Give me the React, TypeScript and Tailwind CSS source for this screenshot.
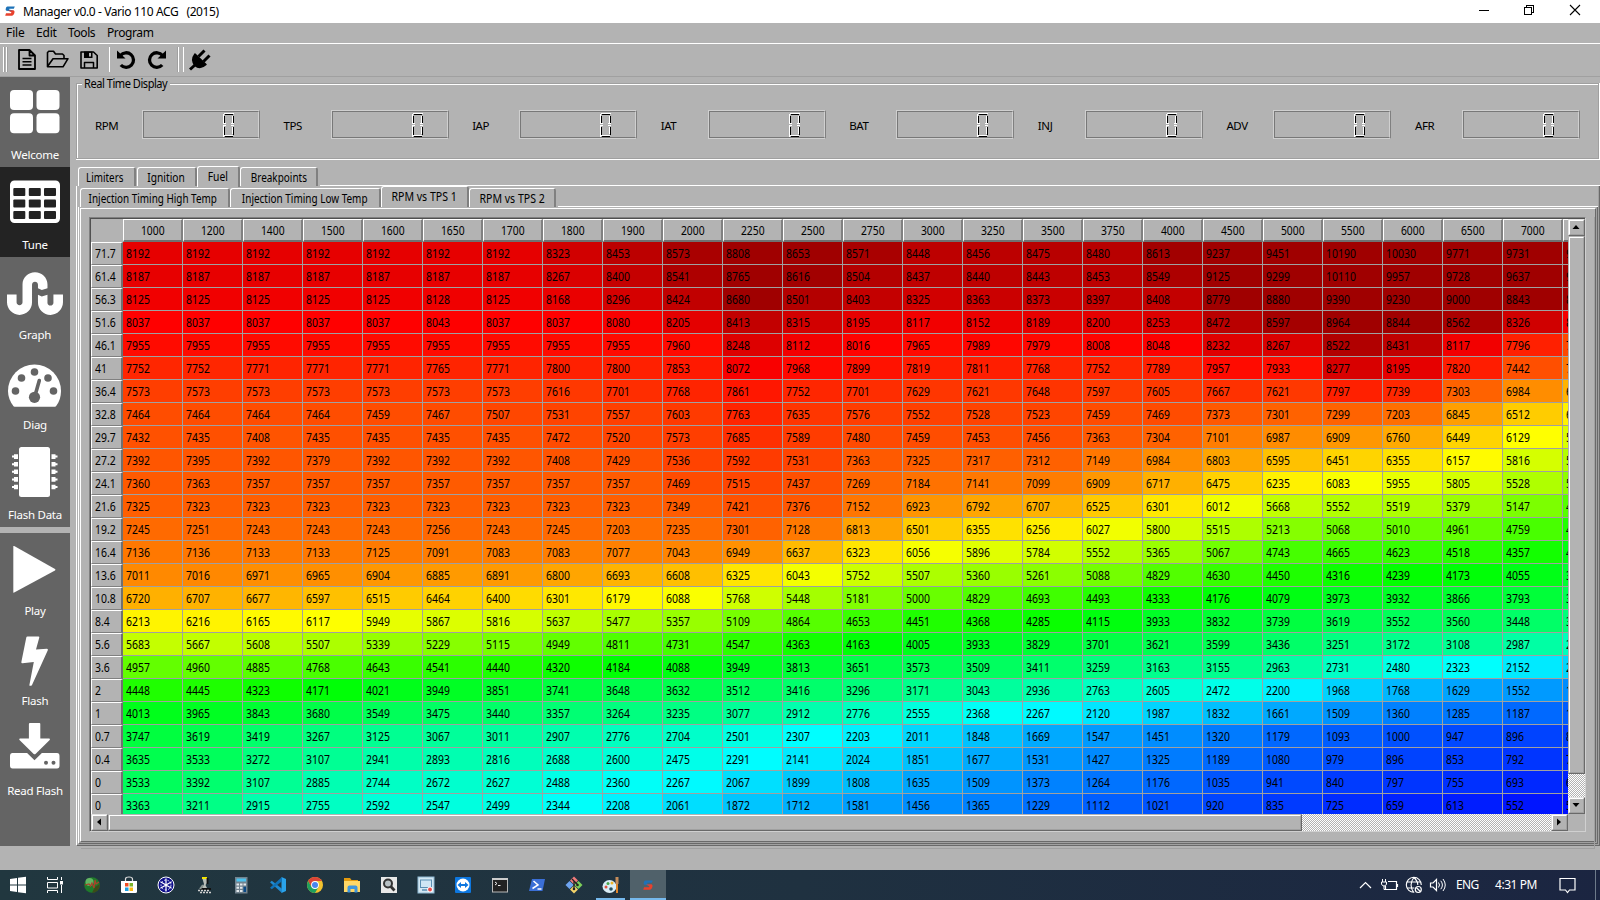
import React from "react";
import { FaStumbleupon } from "react-icons/fa";

const COLUMNS = [1000, 1200, 1400, 1500, 1600, 1650, 1700, 1800, 1900, 2000, 2250, 2500, 2750, 3000, 3250, 3500, 3750, 4000, 4500, 5000, 5500, 6000, 6500, 7000];

const TABLE: [string, string][] = [
  ["71.7", "8192 8192 8192 8192 8192 8192 8192 8323 8453 8573 8808 8653 8571 8448 8456 8475 8480 8613 9237 9451 10190 10030 9771 9731 9500"],
  ["61.4", "8187 8187 8187 8187 8187 8187 8187 8267 8400 8541 8765 8616 8504 8437 8440 8443 8453 8549 9125 9299 10110 9957 9728 9637 9400"],
  ["56.3", "8125 8125 8125 8125 8125 8128 8125 8168 8296 8424 8680 8501 8403 8325 8363 8373 8397 8408 8779 8880 9390 9230 9000 8843 8650"],
  ["51.6", "8037 8037 8037 8037 8037 8043 8037 8037 8080 8205 8413 8315 8195 8117 8152 8189 8200 8253 8472 8597 8964 8844 8562 8326 8100"],
  ["46.1", "7955 7955 7955 7955 7955 7955 7955 7955 7955 7960 8248 8112 8016 7965 7989 7979 8008 8048 8232 8267 8522 8431 8117 7796 7500"],
  ["41", "7752 7752 7771 7771 7771 7765 7771 7800 7800 7853 8072 7968 7899 7819 7811 7768 7752 7789 7957 7933 8277 8195 7820 7442 7150"],
  ["36.4", "7573 7573 7573 7573 7573 7573 7573 7616 7701 7768 7861 7752 7701 7629 7621 7648 7597 7605 7667 7621 7797 7739 7303 6984 6700"],
  ["32.8", "7464 7464 7464 7464 7459 7467 7507 7531 7557 7603 7763 7635 7576 7552 7528 7523 7459 7469 7373 7301 7299 7203 6845 6512 6220"],
  ["29.7", "7432 7435 7408 7435 7435 7435 7435 7472 7520 7573 7685 7589 7480 7459 7453 7456 7363 7304 7101 6987 6909 6760 6449 6129 5850"],
  ["27.2", "7392 7395 7392 7379 7392 7392 7392 7408 7429 7536 7592 7531 7363 7325 7317 7312 7149 6984 6803 6595 6451 6355 6157 5816 5560"],
  ["24.1", "7360 7363 7357 7357 7357 7357 7357 7357 7357 7469 7515 7437 7269 7184 7141 7099 6909 6717 6475 6235 6083 5955 5805 5528 5280"],
  ["21.6", "7325 7323 7323 7323 7323 7323 7323 7323 7323 7349 7421 7376 7152 6923 6792 6707 6525 6301 6012 5668 5552 5519 5379 5147 4850"],
  ["19.2", "7245 7251 7243 7243 7243 7256 7243 7245 7203 7235 7301 7128 6813 6501 6355 6256 6027 5800 5515 5213 5068 5010 4961 4759 4450"],
  ["16.4", "7136 7136 7133 7133 7125 7091 7083 7083 7077 7043 6949 6637 6323 6056 5896 5784 5552 5365 5067 4743 4665 4623 4518 4357 4100"],
  ["13.6", "7011 7016 6971 6965 6904 6885 6891 6800 6693 6608 6325 6043 5752 5507 5360 5261 5088 4829 4630 4450 4316 4239 4173 4055 3850"],
  ["10.8", "6720 6707 6677 6597 6515 6464 6400 6301 6179 6088 5768 5448 5181 5000 4829 4693 4493 4333 4176 4079 3973 3932 3866 3793 3600"],
  ["8.4", "6213 6216 6165 6117 5949 5867 5816 5637 5477 5357 5109 4864 4653 4451 4368 4285 4115 3933 3832 3739 3619 3552 3560 3448 3300"],
  ["5.6", "5683 5667 5608 5507 5339 5229 5115 4949 4811 4731 4547 4363 4163 4005 3933 3829 3701 3621 3599 3436 3251 3172 3108 2987 2800"],
  ["3.6", "4957 4960 4885 4768 4643 4541 4440 4320 4184 4088 3949 3813 3651 3573 3509 3411 3259 3163 3155 2963 2731 2480 2323 2152 2000"],
  ["2", "4448 4445 4323 4171 4021 3949 3851 3741 3648 3632 3512 3416 3296 3171 3043 2936 2763 2605 2472 2200 1968 1768 1629 1552 1450"],
  ["1", "4013 3965 3843 3680 3549 3475 3440 3357 3264 3235 3077 2912 2776 2555 2368 2267 2120 1987 1832 1661 1509 1360 1285 1187 1080"],
  ["0.7", "3747 3619 3419 3267 3125 3067 3011 2907 2776 2704 2501 2307 2203 2011 1848 1669 1547 1451 1320 1179 1093 1000 947 896 850"],
  ["0.4", "3635 3533 3272 3107 2941 2893 2816 2688 2600 2475 2291 2141 2024 1851 1677 1531 1427 1325 1189 1080 979 896 853 792 720"],
  ["0", "3533 3392 3107 2885 2744 2672 2627 2488 2360 2267 2067 1899 1808 1635 1509 1373 1264 1176 1035 941 840 797 755 693 630"],
  ["0", "3363 3211 2915 2755 2592 2547 2499 2344 2208 2061 1872 1712 1581 1456 1365 1229 1112 1021 920 835 725 659 613 552 510"],
];

/* Heat scale: blue > cyan > green > yellow > red > dark red */
function heat(v: number): string {
  const seg = 1910;
  const f = (d: number) => Math.max(0, Math.min(255, Math.round((d / seg) * 255)));
  if (v >= 8037) return `rgb(${Math.max(160, Math.round(255 - (v - 8037) * 0.161))},0,0)`;
  if (v >= 6127) return `rgb(255,${f(8037 - v)},0)`;
  if (v >= 4217) return `rgb(${f(v - 4217)},255,0)`;
  if (v >= 2307) return `rgb(0,255,${f(4217 - v)})`;
  return `rgb(0,${f(v - 397)},255)`;
}

function TitleLogo({ className }: { className: string }) {
  return (
    <svg viewBox="0 0 10 10" className={className}>
      <path d="M2.4 0.4 H9.8 L8.8 2.8 H4.4 L4 3.6 L8 4.6 L7.4 5.6 L1.4 4.8 Q0.2 4.2 0.8 2.4 Q1.2 0.6 2.4 0.4Z" fill="#1d72b8" />
      <path d="M3 4.6 L8.6 4.2 Q10 4.8 9.4 7 Q8.8 9.4 7.2 9.7 H0.2 L1 7.3 H6 L6.4 6.2Z" fill="#e8412c" />
    </svg>
  );
}

function TitleBar() {
  return (
    <div className="flex h-[23px] shrink-0 items-center bg-white pl-[5px] text-black">
      <TitleLogo className="mt-[-2px] h-[10px] w-[10px]" />
      <span className="ml-2 whitespace-pre text-[12px] leading-[22px] tracking-[-0.4px]">Manager v0.0 - Vario 110 ACG   (2015)</span>
      <svg viewBox="0 0 110 23" className="ml-auto mr-[16px] h-[23px] w-[110px]" fill="none" stroke="#000" shapeRendering="crispEdges">
        <path d="M5 10.5 H15" />
        <path d="M50.5 7.5 H57.5 V14.5 H50.5Z M52.5 7 V5.5 H59.5 V12.5 H58" />
        <path d="M96 5 L106 15 M106 5 L96 15" shapeRendering="auto" strokeWidth="1.1" />
      </svg>
    </div>
  );
}

function MenuBar() {
  return (
    <div className="flex h-[20px] shrink-0 items-center pl-[6px] text-[12px] leading-[20px]">
      <span className="w-[30px] tracking-[-0.1px]">File</span>
      <span className="w-[32px] tracking-[-0.2px]">Edit</span>
      <span className="w-[39px] tracking-[-0.4px]">Tools</span>
      <span className="tracking-[-0.4px]">Program</span>
    </div>
  );
}

function ToolBar() {
  return (
    <div className="flex h-[34px] shrink-0 items-center border-t border-b border-t-white border-b-[#a0a0a0]">
      <svg viewBox="0 0 220 32" className="h-[32px] w-[220px]" fill="none" stroke="#000">
        <g shapeRendering="crispEdges">
          <path d="M3.5 3 V28 M6.5 3 V28 M109.5 3 V28 M178.5 3 V28 M183.5 3 V28" stroke="#fff" />
          <path d="M4.5 3 V28 M7.5 3 V28 M177.5 3 V28" stroke="#a0a0a0" />
        </g>
        <g strokeWidth="1.8" strokeLinejoin="round">
          <path d="M19 6 H29.5 L35 11.5 V25 H19Z M29.5 6 V11.5 H35" />
          <path d="M22.5 14.5 H31.5 M22.5 17.8 H31.5 M22.5 21 H31.5" strokeWidth="1.4" />
          <path d="M47.5 22.5 V8.5 L49 7.2 H53.5 L55.5 10 H62.5 L64 11.5 V14.5 M47.5 22.5 L53 14.7 H68 L63 22.8 H47.5Z" strokeWidth="1.6" />
          <path d="M81 8 H93.5 L97.2 11.5 V24 H81Z" strokeWidth="1.6" />
          <path d="M84.5 24 V18.5 H93.5 V24" strokeWidth="1.5" />
        </g>
        <path d="M84 7.5 H92.5 V14 H84Z M89 8.7 V12.5 H91 V8.7Z" fill="#000" fillRule="evenodd" stroke="none" />
        <path d="M120.5 11.5 A7.3 7.3 0 1 1 120.8 21" strokeWidth="3.3" />
        <path d="M117 6.5 V14.5 H125.5Z" fill="#000" stroke="none" />
        <path d="M162.5 11.5 A7.3 7.3 0 1 0 162.2 21" strokeWidth="3.3" />
        <path d="M166 6.5 V14.5 H157.5Z" fill="#000" stroke="none" />
        <path d="M195 10 L206 20.5 Q200 26 195 21.5 Q190.5 16 195 10Z" fill="#000" strokeWidth="1.5" strokeLinejoin="round" />
        <path d="M195.5 20.5 L190 25.5" strokeWidth="3" />
        <path d="M198.5 12.5 L204.5 6.5 M203.5 17.5 L209.5 11.5" strokeWidth="3" />
      </svg>
    </div>
  );
}

function IconWelcome() {
  return (
    <svg viewBox="0 0 70 90" className="h-[90px] w-[70px]" fill="#fff">
      <rect x="10" y="13" width="23" height="20" rx="4" />
      <rect x="36.5" y="13" width="23" height="20" rx="4" />
      <rect x="10" y="36.3" width="23" height="20" rx="4" />
      <rect x="36.5" y="36.3" width="23" height="20" rx="4" />
    </svg>
  );
}

function IconTable() {
  return (
    <svg viewBox="0 0 70 90" className="h-[90px] w-[70px]">
      <rect x="10" y="13.5" width="50" height="42.5" rx="4.5" fill="#fff" />
      <g fill="#232323">
        {[13.3, 28.8, 44].map((x) =>
          [21, 32.6, 44].map((y) => <rect key={`${x}-${y}`} x={x} y={y} width="12" height="8" rx="1" />)
        )}
      </g>
    </svg>
  );
}

function IconGauge() {
  return (
    <svg viewBox="0 0 70 90" className="h-[90px] w-[70px]">
      <path d="M13.5 59.3 C10 54.5 8 49.5 8 44 A26.5 26.5 0 0 1 61 44 C61 49.5 59.5 54.5 56 59.3 Q55.5 59.7 55 59.7 H14.5 Q14 59.7 13.5 59.3Z" fill="#fff" />
      <g fill="#646464">
        <circle cx="15.5" cy="44" r="3.8" />
        <circle cx="21.5" cy="31" r="3.8" />
        <circle cx="34.5" cy="25" r="3.8" />
        <circle cx="48" cy="31" r="3.8" />
        <circle cx="53.5" cy="44" r="3.8" />
        <circle cx="34.5" cy="50.3" r="5.6" />
      </g>
      <path d="M35.5 47 L39.3 33.5" stroke="#646464" strokeWidth="3.6" strokeLinecap="round" />
    </svg>
  );
}

function IconChip() {
  return (
    <svg viewBox="0 0 70 90" className="h-[90px] w-[70px]" fill="#fff">
      <rect x="19" y="10" width="31" height="50" rx="2.5" />
      {[19.6, 27.2, 34.8, 42.4, 50].map((y) => (
        <g key={y}>
          <path d={`M18 ${y - 2.3} H14 V${y - 1} H12 V${y + 1} H14 V${y + 2.3} H18Z`} />
          <path d={`M51.5 ${y - 2.3} H55.5 V${y - 1} H57.5 V${y + 1} H55.5 V${y + 2.3} H51.5Z`} />
        </g>
      ))}
    </svg>
  );
}

function IconPlay() {
  return (
    <svg viewBox="0 0 70 90" className="h-[90px] w-[70px]" fill="#fff">
      <path d="M13.3 13.5 Q13.3 12.6 14.2 13.1 L55 36 Q56 36.7 55 37.4 L14.2 59.6 Q13.3 60 13.3 59.2Z" />
    </svg>
  );
}

function IconBolt() {
  return (
    <svg viewBox="0 0 70 90" className="h-[90px] w-[70px]" fill="#fff">
      <path d="M27.5 13.5 H38.5 Q39.5 13.5 39.3 14.5 L36 26.5 L47 25.8 Q48.3 26 47.8 27.3 L32 62 Q31 63.4 29.3 62.5 L33.8 39 L22.5 40.3 Q21 40.4 21.4 38.8 L26.3 14.5 Q26.5 13.5 27.5 13.5Z" />
    </svg>
  );
}

function IconDrive() {
  return (
    <svg viewBox="0 0 70 90" className="h-[90px] w-[70px]">
      <path d="M12.5 40 H57 Q59.5 40 59.5 43 V52.5 Q59.5 55.5 57 55.5 H12.5 Q10 55.5 10 52.5 V43 Q10 40 12.5 40Z" fill="#fff" />
      <path d="M28 38 L34.5 44.5 L41 38" stroke="#646464" strokeWidth="4" fill="#646464" />
      <path d="M30 10 H39.5 Q40.3 10 40.3 11 V25.5 H49.2 Q50.5 25.8 49.7 26.9 L35.5 41 Q34.6 41.7 33.7 41 L19.5 26.9 Q18.6 25.8 20 25.5 H28.9 V11 Q28.9 10 30 10Z" fill="#fff" />
      <circle cx="46" cy="49.7" r="2" fill="#646464" />
      <circle cx="53.5" cy="49.7" r="2" fill="#646464" />
    </svg>
  );
}

function SideItem({ label, active, children }: { label: string; active?: boolean; children: React.ReactNode }) {
  return (
    <div className={active ? "relative h-[90px] bg-[#232323]" : "relative h-[90px]"}>
      {children}
      <span className="absolute inset-x-0 top-[69px] text-center text-[11.5px] leading-[18px] tracking-[-0.25px] whitespace-nowrap text-white">{label}</span>
    </div>
  );
}

function Sidebar() {
  return (
    <div className="flex h-[769px] w-[70px] shrink-0 flex-col gap-[6px]">
      <div className="h-[450px] bg-[#646464]">
        <SideItem label="Welcome"><IconWelcome /></SideItem>
        <SideItem label="Tune" active><IconTable /></SideItem>
        <SideItem label="Graph">
          <div className="flex h-[90px] w-[70px] justify-center pt-[8px]">
            <FaStumbleupon className="h-[57px] w-[57px] text-white" />
          </div>
        </SideItem>
        <SideItem label="Diag"><IconGauge /></SideItem>
        <SideItem label="Flash Data"><IconChip /></SideItem>
      </div>
      <div className="flex-1 bg-[#646464]">
        <SideItem label="Play"><IconPlay /></SideItem>
        <SideItem label="Flash"><IconBolt /></SideItem>
        <SideItem label="Read Flash"><IconDrive /></SideItem>
      </div>
    </div>
  );
}

function Lcd() {
  return (
    <div className="flex h-[29px] w-[118px] border border-t-[#d0d0d0] border-r-[#808080] border-b-[#d0d0d0] border-l-[#d0d0d0]">
      <div className="flex-1 border border-t-[#787878] border-r-[#d0d0d0] border-b-[#787878] border-l-[#787878]">
        <svg viewBox="0 0 114 25" className="h-[25px] w-[114px]" shapeRendering="crispEdges" fill="none">
          <path d="M79.5 1.5 V12 M79.5 14 V24.5 M80 1.5 H90 M80 23.5 H89 M88.5 4 V11 M88.5 15 V22 M79 11.5 H82 M79 13.5 H82 M87 11.5 H90 M87 13.5 H90" stroke="#fff" />
          <path d="M81 2.5 H89 M81 24.5 H89 M80.5 4 V11 M80.5 15 V23 M89.5 4 V11 M89.5 15 V23" stroke="#000" />
        </svg>
      </div>
    </div>
  );
}

function RealTimeDisplay() {
  return (
    <div className="relative mt-[6px] mr-px ml-[6px] h-[76px] border border-[#a0a0a0]">
      <div className="flex h-full w-full items-start justify-between border-t border-l border-white pt-[25px] pr-[18px] pl-[17px]">
        {["RPM", "TPS", "IAP", "IAT", "BAT", "INJ", "ADV", "AFR"].map((n) => (
          <div key={n} className="flex items-center">
            <span className="mt-[3px] w-[47px] text-[11.5px] leading-[18px] tracking-[-0.4px]">{n}</span>
            <Lcd />
          </div>
        ))}
      </div>
      <div className="absolute -bottom-[2px] -left-px right-[-2px] h-px bg-white" />
      <div className="absolute -top-px -right-[2px] bottom-[-2px] w-px bg-white" />
      <div className="absolute -top-[2px] left-[5px] flex h-[4px] w-[88px] items-center bg-[#b3b3b3] pl-[2px]">
        <span className="origin-left scale-x-[0.92] text-[12px] leading-[18px] tracking-[-0.5px] whitespace-nowrap">Real Time Display</span>
      </div>
    </div>
  );
}

function Tab({ label, box, squeeze, active }: { label: string; box: string; squeeze: string; active?: boolean }) {
  const base = "flex justify-center rounded-t-[3px] border-t border-l border-r-2 border-t-white border-l-white border-r-[#808080] whitespace-nowrap text-[12px] leading-[20px]";
  return (
    <div className={`${base} ${active ? "h-[21px]" : "h-[19px]"} ${box}`}>
      <span className={`shrink-0 ${squeeze}`}>{label}</span>
    </div>
  );
}

function HeaderCell({ children }: { children?: React.ReactNode }) {
  return (
    <div className="flex h-[23px] w-[60px] shrink-0 items-center justify-center border-t border-r-2 border-b-2 border-l border-t-white border-r-[#808080] border-b-[#707070] border-l-white pt-[2px]">
      <span className="scale-x-[0.86] text-[12px] leading-[20px]">{children}</span>
    </div>
  );
}

function MapGrid() {
  return (
    <div className="h-[595px] w-[1477px] overflow-hidden">
      <div className="flex w-[1532px]">
        <div className="h-[23px] w-[32px] shrink-0" />
        {COLUMNS.map((c) => (
          <HeaderCell key={c}>{c}</HeaderCell>
        ))}
        <HeaderCell />
      </div>
      {TABLE.map(([head, values], r) => (
        <div key={r} className="flex w-[1532px]">
          <div className="flex h-[23px] w-[32px] shrink-0 items-center border-t border-r-2 border-b border-l border-t-white border-r-[#707070] border-b-[#808080] border-l-white pt-px pl-[3px]">
            <span className="origin-left scale-x-[0.87] text-[12px] leading-[20px]">{head}</span>
          </div>
          {values.split(" ").map((v, i) => (
            <div key={i} className="flex h-[23px] w-[60px] shrink-0 items-center border-r border-b border-[#a0a0a0] pt-[2px] pl-[3px]" style={{ backgroundColor: heat(Number(v)) }}>
              <span className="origin-left scale-x-[0.87] text-[12px] leading-[20px]">{v}</span>
            </div>
          ))}
        </div>
      ))}
    </div>
  );
}

function ScrollButton({ points, box }: { points: string; box: string }) {
  return (
    <div className={`shrink-0 border border-t-[#e3e3e3] border-r-[#696969] border-b-[#696969] border-l-[#e3e3e3] ${box}`}>
      <div className="flex h-full w-full items-center justify-center border border-t-white border-r-[#a0a0a0] border-b-[#a0a0a0] border-l-white pr-px pb-px">
        <svg viewBox="0 0 8 8" className="h-[8px] w-[8px]">
          <polygon points={points} fill="#000" />
        </svg>
      </div>
    </div>
  );
}

function Thumb({ box }: { box: string }) {
  return (
    <div className={`border border-t-[#b3b3b3] border-r-[#696969] border-b-[#696969] border-l-[#b3b3b3] bg-[#b3b3b3] ${box}`}>
      <div className="h-full w-full border border-t-white border-r-[#a0a0a0] border-b-[#a0a0a0] border-l-white" />
    </div>
  );
}

const DITHER = "bg-[repeating-conic-gradient(#fff_0_25%,#b3b3b3_0_50%)] bg-[length:2px_2px]";

function MapView() {
  return (
    <div className="mt-[8px] ml-[8px] h-[615px] w-[1497px] border border-t-[#808080] border-r-[#d0d0d0] border-b-[#d0d0d0] border-l-[#808080]">
      <div className="h-full w-full border-t border-l border-[#505050]">
        <div className="flex">
          <MapGrid />
          <div className={`flex h-[595px] w-[17px] flex-col ${DITHER}`}>
            <ScrollButton box="h-[17px] w-[17px] bg-[#b3b3b3]" points="0.5,6 4,2 7.5,6" />
            <Thumb box="h-[538px] w-[17px]" />
            <div className="flex-1" />
            <ScrollButton box="h-[17px] w-[17px] bg-[#b3b3b3]" points="0.5,2 7.5,2 4,6" />
          </div>
        </div>
        <div className={`flex h-[17px] w-[1477px] ${DITHER}`}>
          <ScrollButton box="h-[17px] w-[17px] bg-[#b3b3b3]" points="6,0.5 6,7.5 2,4" />
          <Thumb box="h-[17px] w-[1194px]" />
          <div className="flex-1" />
          <ScrollButton box="h-[17px] w-[17px] bg-[#b3b3b3]" points="2,0.5 2,7.5 6,4" />
        </div>
      </div>
    </div>
  );
}

const PANE = "border-t border-l border-t-white border-l-white border-r border-b border-r-[#696969] border-b-[#696969]";

function TunePane() {
  return (
    <div className="mt-[7px] ml-[6px] flex flex-1 flex-col">
      <div className="flex h-[20px] shrink-0 items-end pl-[2px]">
        <Tab label="Limiters" box="w-[58px] pr-[3px]" squeeze="scale-x-[0.82]" />
        <Tab label="Ignition" box="ml-px w-[60px] pr-px" squeeze="scale-x-[0.85]" />
        <Tab label="Fuel" box="-mb-px w-[43px] pr-px" squeeze="scale-x-[0.86]" active />
        <Tab label="Breakpoints" box="w-[78px]" squeeze="scale-x-[0.83]" />
        <div className="ml-[2px] h-px flex-1 bg-white" />
      </div>
      <div className="flex h-[660px] flex-col border-r border-b border-l border-r-[#696969] border-b-[#696969] border-l-white">
        <div className="flex flex-1 flex-col border-r border-b border-[#a0a0a0] pl-px">
          <div className="flex h-[21px] shrink-0 items-end pl-[2px]">
            <Tab label="Injection Timing High Temp" box="w-[150px] pr-[3px]" squeeze="scale-x-[0.825]" />
            <Tab label="Injection Timing Low Temp" box="w-[151px] pr-px" squeeze="scale-x-[0.83]" />
            <Tab label="RPM vs TPS 1" box="w-[88px]" squeeze="scale-x-[0.88]" active />
            <Tab label="RPM vs TPS 2" box="w-[87px] pl-px" squeeze="scale-x-[0.88]" />
            <div className="ml-[2px] h-px flex-1 bg-white" />
          </div>
          <div className="flex flex-1 flex-col border-r border-b border-l border-r-[#696969] border-b-[#696969] border-l-white">
            <div className="flex flex-1 flex-col border-r border-b border-[#a0a0a0] pt-px pl-px">
              <div className={`flex-1 ${PANE}`}>
                <div className="h-full w-full border-r border-b border-[#a0a0a0]">
                  <MapView />
                </div>
              </div>
            </div>
          </div>
        </div>
      </div>
    </div>
  );
}

function S({ children }: { children: React.ReactNode }) {
  return <svg viewBox="0 0 18 18" className="h-[18px] w-[18px]">{children}</svg>;
}

function TaskIcon({ children, box = "w-[37px]" }: { children: React.ReactNode; box?: string }) {
  return <div className={`flex h-[30px] shrink-0 items-center justify-center ${box}`}>{children}</div>;
}

function TaskBar() {
  return (
    <div className="flex h-[30px] shrink-0 bg-linear-to-r from-[#21373f] via-[#1f3140] to-[#1b2541] text-white">
      <TaskIcon box="w-[36px]">
        <S><path d="M1 3 L8 2 V8.5 H1Z M9 1.8 L17 0.8 V8.5 H9Z M1 9.5 H8 V16 L1 15Z M9 9.5 H17 V17.2 L9 16.2Z" fill="#fff" /></S>
      </TaskIcon>
      <TaskIcon>
        <S><path d="M1.5 1 V3.5 H11.5 V1 M1.5 17 V14.5 H11.5 V17 M1.5 6.5 H11.5 V12 H1.5Z M15.5 1 V4 M15.5 9 V17" fill="none" stroke="#fff" /><path d="M14 5 H17 V8.5 H14Z" fill="#fff" /></S>
      </TaskIcon>
      <TaskIcon box="w-[38px]">
        <S><circle cx="9" cy="9" r="7.8" fill="#1f7a2a" /><circle cx="6.5" cy="6" r="4" fill="#7fd07c" opacity=".7" /><path d="M9 16.8 A7.8 7.8 0 0 0 16.7 8 L12 11Z" fill="#3c4a18" /><path d="M2 9 L6 8 L7.5 10 L9 7 L11 12 L12 4 L13 8 L16 6" stroke="#a8432b" strokeWidth="1.2" fill="none" /></S>
      </TaskIcon>
      <TaskIcon box="w-[36px]">
        <S><path d="M1 5 H17 V15.5 Q17 17 15.5 17 H2.5 Q1 17 1 15.5Z" fill="#fff" /><path d="M5.5 5 V3 Q5.5 1 9 1 Q12.5 1 12.5 3 V5" fill="none" stroke="#ddd" strokeWidth="1.2" /><path d="M5 7 H8.5 V10.5 H5Z" fill="#f04e23" /><path d="M9.5 7 H13 V10.5 H9.5Z" fill="#7db52b" /><path d="M5 11.5 H8.5 V15 H5Z" fill="#1ba1e2" /><path d="M9.5 11.5 H13 V15 H9.5Z" fill="#fdb913" /></S>
      </TaskIcon>
      <TaskIcon box="w-[38px]">
        <S><circle cx="9" cy="9" r="8" fill="#10108c" stroke="#fff" strokeWidth="1" /><circle cx="9" cy="9" r="5" fill="none" stroke="#fff" strokeWidth=".8" strokeDasharray="2 1.5" /><path d="M9 2.5 V15.5 M3.4 5.8 L14.6 12.2 M14.6 5.8 L3.4 12.2" stroke="#fff" strokeWidth="1.2" /></S>
      </TaskIcon>
      <TaskIcon box="w-[37px]">
        <S><path d="M7 1 H12 V3 H7Z" fill="#f3e600" /><path d="M7.5 3 H12 V7 L10.5 9 L12 12 H7 L9 8Z" fill="#b9bdb8" /><path d="M12.5 2 V8 M5 13 H16 M12 12 V14" stroke="#111" strokeWidth="1.8" /><path d="M3 14.5 H15 M5 16.5 H17" stroke="#d0d0d0" strokeWidth="1.3" strokeDasharray="2 1" /><path d="M8 9 L5 13" stroke="#8d9691" strokeWidth="2" /></S>
      </TaskIcon>
      <TaskIcon>
        <S><rect x="3" y="1" width="12.5" height="16.5" fill="#72838f" /><path d="M4.5 2.5 H14 V5.5 H4.5Z" fill="#4cc2ef" /><path d="M4.5 7.5 H7 V9.5 H4.5Z M8 7.5 H10.5 V9.5 H8Z M11.5 7.5 H14 V9.5 H11.5Z M4.5 10.7 H7 V12.7 H4.5Z M8 10.7 H10.5 V12.7 H8Z M4.5 14 H7 V16 H4.5Z M8 14 H10.5 V16 H8Z" fill="#e2e8ec" /><path d="M11.5 10.7 H14 V16 H11.5Z" fill="#0b4a86" /></S>
      </TaskIcon>
      <TaskIcon>
        <S><path d="M12.5 1 L17 3 V15 L12.5 17Z" fill="#2aa3ea" /><path d="M1 6.2 L2.8 4.8 L13 12.8 V17Z" fill="#1f8ad2" /><path d="M1 11.8 L2.8 13.2 L13 5.2 V1Z" fill="#0f72b8" /></S>
      </TaskIcon>
      <TaskIcon>
        <S><circle cx="9" cy="9" r="8" fill="#f3c22f" /><path d="M2.1 5 A8 8 0 0 1 15.9 5 H9 L5.5 11Z" fill="#dc4437" /><path d="M2.1 5 A8 8 0 0 0 9 17 L12.5 11 H5.5Z" fill="#1fa05d" /><circle cx="9" cy="9" r="3.9" fill="#fff" /><circle cx="9" cy="9" r="3" fill="#4a85ee" /></S>
      </TaskIcon>
      <TaskIcon>
        <S><path d="M1 2 H7 L8.5 4 H15 V9 H1Z" fill="#e49b0e" /><path d="M1 5 H17 V16 H1Z" fill="#ffd766" /><path d="M4.5 16.5 V11.5 Q4.5 9.5 6.5 9.5 H12.5 Q14.5 9.5 14.5 11.5 V16.5 H11.5 V13 H7.5 V16.5Z" fill="#3f96dc" /></S>
      </TaskIcon>
      <TaskIcon>
        <S><rect x="1" y="1" width="16" height="16" fill="#e8e8e8" /><circle cx="8" cy="7.5" r="4" fill="#b7c0c4" stroke="#333" strokeWidth="2" /><path d="M10.8 10.5 L14.5 14.5" stroke="#333" strokeWidth="2.8" /></S>
      </TaskIcon>
      <TaskIcon>
        <S><rect x="1" y="1" width="16" height="16" fill="#d3e7f3" stroke="#8fb9d3" /><rect x="3.5" y="4" width="11" height="7.5" fill="#cfe6f5" stroke="#5b8fb3" /><path d="M5 14 H11" stroke="#5b8fb3" strokeWidth="1.5" /><circle cx="13" cy="13.5" r="2.8" fill="#fff" /><circle cx="13" cy="13.5" r="1.9" fill="#e84a4a" /></S>
      </TaskIcon>
      <TaskIcon>
        <S><rect x="1" y="1" width="16" height="16" rx="1" fill="#0d77e0" /><circle cx="9" cy="9" r="6.5" fill="#fff" /><path d="M3.5 9 L7 6 V8 H11 V6 L14.5 9 L11 12 V10 H7 V12Z" fill="#0d77e0" /></S>
      </TaskIcon>
      <TaskIcon>
        <S><rect x="1.5" y="2.5" width="15" height="13.5" fill="#222" stroke="#b8b8b8" /><path d="M1 2 H17 V4 H1Z" fill="#ccc" /><path d="M4 6 L6 7.5 L4 9 M7 9.5 H9.5" stroke="#eee" fill="none" /></S>
      </TaskIcon>
      <TaskIcon>
        <S><path d="M4 3 H17 L14.5 15 H1Z" fill="#3b6fd6" /><path d="M5.5 5 L10 9 L4.5 12.5 M9.5 13 H13.5" stroke="#fff" strokeWidth="1.5" fill="none" /></S>
      </TaskIcon>
      <TaskIcon>
        <S><path d="M9 0.5 L13 4.5 L9 8.5 L5 4.5Z" fill="#f07b7b" /><path d="M0.5 9 L4.5 5 L8.8 9 L4.5 13Z" fill="#6ea4f0" /><path d="M17.5 9 L13.5 5 L9.2 9 L13.5 13Z" fill="#7ccf5a" /><path d="M9 17.5 L13 13.5 L9 9.5 L5 13.5Z" fill="#f3d36a" /><path d="M9 5 V14 M7 3 L12.5 8.5" stroke="#222" strokeWidth="1.3" /><circle cx="9" cy="13" r="1.3" fill="#222" /><circle cx="12.5" cy="9" r="1.3" fill="#222" /></S>
      </TaskIcon>
      <TaskIcon box="relative w-[37px]">
        <S><ellipse cx="7.5" cy="10.5" rx="7" ry="6.5" fill="#d9edf7" /><circle cx="4" cy="11" r="1.5" fill="#e0523e" /><circle cx="6" cy="7.5" r="1.5" fill="#4aa44a" /><circle cx="10" cy="7" r="1.5" fill="#f0b429" /><circle cx="9" cy="13" r="1.8" fill="#26515e" /><path d="M15 1 V8" stroke="#c58c5a" strokeWidth="3" /><path d="M15 8 V17" stroke="#e08428" strokeWidth="2" /></S>
        <div className="absolute inset-x-[4px] bottom-0 h-[2px] bg-[#76b9ed]" />
      </TaskIcon>
      <TaskIcon box="relative ml-px w-[36px] bg-[#50616a]">
        <TitleLogo className="h-[10px] w-[10px]" />
        <div className="absolute inset-x-0 bottom-0 h-[2px] bg-[#76b9ed]" />
      </TaskIcon>
      <div className="ml-auto flex items-center">
        <svg viewBox="0 0 88 30" className="h-[30px] w-[88px]" fill="none" stroke="#fff" strokeWidth="1.2">
          <path d="M1 18 L6.5 12.5 L12 18" />
          <path d="M29 11.5 H37.5 V19.5 H26.5 V16 M38.5 14 V17" />
          <path d="M23.5 9 V12 M26.5 9 V12 M22.5 12 H27.5 V14 Q27 16 25 16 Q23 16 22.5 14Z M25 16 V19.5 H27" strokeWidth="1" />
          <g transform="translate(1.3 0)">
            <path d="M54 22.3 A7.5 7.5 0 1 1 61 15 M46.5 12 H60.5 M46.5 18 H54 M53.5 7.5 Q48 15 53.5 22.5 M53.5 7.5 Q57.5 11 57.5 15" strokeWidth="1.1" />
            <circle cx="58" cy="19.5" r="3" />
            <path d="M56 17.5 L60 21.5" />
          </g>
          <g transform="translate(1 0)">
            <path d="M70.5 13 H73 L76.5 9.5 V20.5 L73 17 H70.5Z" />
            <path d="M78.5 12.5 Q80.5 15 78.5 17.5 M80.8 10.8 Q84 15 80.8 19.2 M83 9 Q87.5 15 83 21" strokeWidth="1" />
          </g>
        </svg>
        <span className="ml-[9px] w-[39px] text-[12px] leading-[30px] tracking-[-0.6px]">ENG</span>
        <span className="w-[64px] text-[12px] leading-[30px] tracking-[-0.45px] whitespace-nowrap">4:31 PM</span>
        <svg viewBox="0 0 18 18" className="h-[18px] w-[18px]" fill="none" stroke="#fff" strokeWidth="1.2">
          <path d="M1 2.5 H16 V14 H10.5 L8.5 16.5 L6.5 14 H1Z" />
        </svg>
        <div className="ml-[18px] h-[30px] w-px bg-[#6d7a8a]" />
        <div className="w-[4px]" />
      </div>
    </div>
  );
}

export default function App() {
  return (
    <div className="flex h-[900px] w-[1600px] flex-col overflow-hidden bg-[#b3b3b3] font-['Noto_Sans',sans-serif] text-black">
      <TitleBar />
      <MenuBar />
      <ToolBar />
      <div className="flex h-[769px] shrink-0">
        <Sidebar />
        <div className="flex flex-1 flex-col">
          <RealTimeDisplay />
          <TunePane />
        </div>
      </div>
      <div className="flex-1" />
      <TaskBar />
    </div>
  );
}
